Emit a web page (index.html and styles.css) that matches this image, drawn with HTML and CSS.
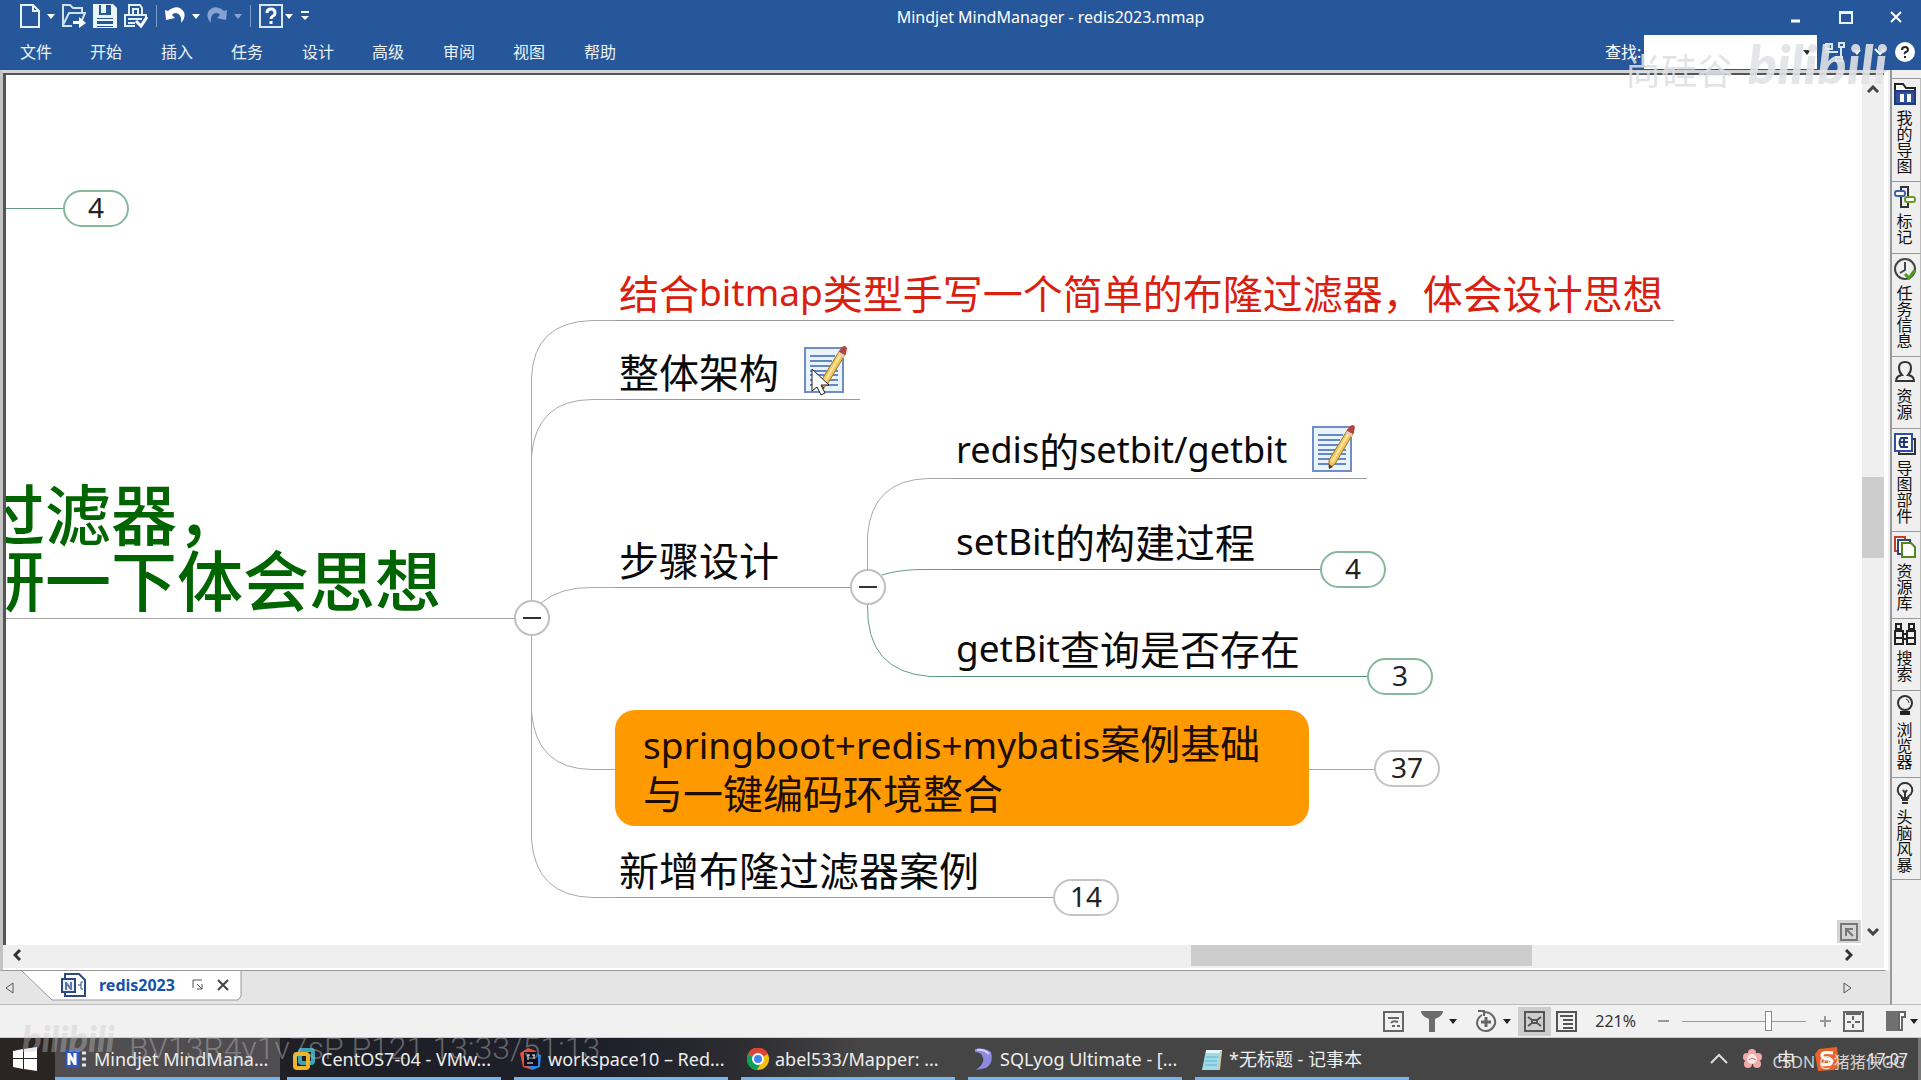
FILE: index.html
```html
<!DOCTYPE html>
<html lang="zh-CN">
<head>
<meta charset="utf-8">
<title>Mindjet MindManager - redis2023.mmap</title>
<link rel="stylesheet" href="styles.css">
</head>
<body>
<svg class="defs" aria-hidden="true">
  <symbol id="i-note" viewBox="0 0 44 48">
    <rect x="1" y="3" width="38" height="44" fill="#eaf2fc" stroke="#6f8fc4" stroke-width="2"/>
    <path d="M6 11h25M6 16h22M6 21h20M6 26h28M6 30h28M6 35h28M6 40h28" stroke="#6288c6" stroke-width="2"/>
    <path d="M36 5l6 3-19 32-6 4 0-8z" fill="#f2c65c" stroke="#9a7430" stroke-width="1"/>
    <path d="M38 7L20 38" stroke="#fbe6a0" stroke-width="2"/>
    <path d="M35 7l2-4q4-4 6 0l-1 5-1 2z" fill="#b9433d"/>
    <path d="M35 7l6 4-1 2-6-4z" fill="#d9d3d0"/>
    <path d="M17 40v5l4-2z" fill="#4a3b2a"/>
  </symbol>
  <symbol id="i-arrow" viewBox="0 0 10 6"><path d="M0 0h10L5 6z" fill="currentColor"/></symbol>
</svg>

<div class="app">
  <header class="head">
    <div class="titlebar">
      <div class="quick">
        <button class="ib" aria-label="新建"><svg width="20" height="24" viewBox="0 0 20 24"><path d="M1 1h12l6 6v16H1zM13 1v6h6" fill="none" stroke="#e6f1f4" stroke-width="2"/></svg></button>
        <button class="ib" aria-label="新建选项"><svg width="8" height="5"><use href="#i-arrow"/></svg></button>
        <button class="ib" aria-label="打开"><svg width="24" height="24" viewBox="0 0 24 24"><path d="M10 22H1V1h7l3 3h9v5M1 21L7 9h16l-3 7M13 4h6" fill="none" stroke="#cfe3ea" stroke-width="2"/><path d="M11 17h6v-4l7 6-7 5v-4h-6z" fill="#fff"/></svg></button>
        <button class="ib" aria-label="保存"><svg width="24" height="24" viewBox="0 0 24 24"><path d="M0 0h20l4 4v20H0z" fill="#eaf6f6"/><path d="M6 1h12v10H6z" fill="#27579b"/><path d="M8 1h5v8H8z" fill="#eaf6f6"/><path d="M4 14h16v9H4z" fill="#27579b"/><path d="M4 16h16M4 21h16" stroke="#eaf6f6" stroke-width="2"/></svg></button>
        <button class="ib" aria-label="打印"><svg width="24" height="24" viewBox="0 0 24 24"><path d="M5 11V1h11l2 3v7M1 23V11h21v5M1 22h10M9 10V5h5v5" fill="none" stroke="#e2f0f3" stroke-width="2"/><path d="M4 14h14v2H4zM4 18h7v2H4z" fill="#e2f0f3"/><path d="M12 17l5 5 6-9" fill="none" stroke="#fff" stroke-width="3"/></svg></button>
        <span class="sep"></span>
        <button class="ib" aria-label="撤销"><svg width="20" height="20" viewBox="0 0 20 20"><path d="M0 4l3 1Q13-3 19 6q2 6-3 11 1-9-5-10-3 0-4 2l3 3-9 2z" fill="#fff"/></svg></button>
        <button class="ib" aria-label="撤销选项"><svg width="8" height="5"><use href="#i-arrow"/></svg></button>
        <button class="ib dim" aria-label="重做"><svg width="20" height="20" viewBox="0 0 20 20"><path d="M20 4l-3 1Q7-3 1 6q-2 6 3 11-1-9 5-10 3 0 4 2l-3 3 9 2z" fill="currentColor"/></svg></button>
        <button class="ib dim" aria-label="重做选项"><svg width="8" height="5"><use href="#i-arrow"/></svg></button>
        <span class="sep"></span>
        <button class="ib" aria-label="帮助"><svg width="24" height="24" viewBox="0 0 24 24"><rect x="1" y="1" width="22" height="22" fill="none" stroke="#d9e8ee" stroke-width="2"/><path d="M8 9q0-4 4-4t4 4q0 2-2 3t-2 3M12 17v3" fill="none" stroke="#fff" stroke-width="3"/></svg><svg width="8" height="5"><use href="#i-arrow"/></svg></button>
        <button class="ib" aria-label="自定义"><svg width="10" height="10" viewBox="0 0 10 10"><path d="M1 1h8" stroke="#fff" stroke-width="2"/><path d="M1 5h8L5 9z" fill="#fff"/></svg></button>
      </div>
      <h1 class="title">Mindjet MindManager - redis2023.mmap</h1>
      <div class="winbtns">
        <button aria-label="最小化"><svg width="14" height="14"><path d="M2 11h9" stroke="#fff" stroke-width="3"/></svg></button>
        <button aria-label="最大化"><svg width="14" height="14"><path d="M1 2h12v11H1zM1 3h12" fill="none" stroke="#e8f4f6" stroke-width="2"/></svg></button>
        <button aria-label="关闭"><svg width="14" height="14"><path d="M2 2l10 10M12 2L2 12" stroke="#fff" stroke-width="2"/></svg></button>
      </div>
    </div>
    <div class="menubar">
      <nav class="menu">
        <button>文件</button><button>开始</button><button>插入</button><button>任务</button><button>设计</button><button>高级</button><button>审阅</button><button>视图</button><button>帮助</button>
      </nav>
      <div class="find">
        <label for="find">查找:</label>
        <span class="findbox"><input id="find" type="text"><svg width="8" height="5"><use href="#i-arrow"/></svg></span>
        <button class="ib" aria-label="查找范围"><svg width="22" height="20" viewBox="0 0 22 20"><path d="M2 2h6v5H2zM2 10h12M12 15h6v4h-6zM15 1h5v4h-5zM17 5v10" fill="none" stroke="#d9e8ee" stroke-width="2"/></svg></button>
        <button class="ib" aria-label="范围选项"><svg width="8" height="5"><use href="#i-arrow"/></svg></button>
        <button class="ib fold-menu" aria-label="折叠"><svg width="12" height="8"><path d="M1 1l5 5 5-5" fill="none" stroke="#fff" stroke-width="2"/></svg></button>
        <button class="ib" aria-label="帮助中心"><svg width="20" height="20" viewBox="0 0 20 20"><circle cx="10" cy="10" r="10" fill="#fff"/><path d="M7 8q0-3 3-3t3 3q0 1-2 2t-1 2M10 14v2" fill="none" stroke="#222" stroke-width="2"/></svg></button>
      </div>
    </div>
    <div class="mark mark-school">尚硅谷</div>
    <div class="mark mark-bili">bilibili</div>
  </header>

  <div class="work">
    <main class="doc">
      <div class="frame">
        <div class="canvas">
          <svg class="links" width="1856" height="869" viewBox="6 75 1856 869" fill="none" stroke-width="1">
            <g stroke="#a9a9a9">
              <path d="M6 618.5H514M1308 769.5H1374"/>
              <path d="M531.5 600V377Q534 322 592 320.5H615"/>
              <path d="M531.5 456Q536 400 592 399.5H615"/>
              <path d="M541 603Q560 587 592 587.5H615"/>
              <path d="M531.5 636V840Q536 896 592 897.5H615"/>
              <path d="M531.5 712Q536 769 592 769.5H615"/>
              <path d="M867.5 569V535Q872 480 928 478.5H953"/>
            </g>
            <g stroke="#5f9f80">
              <path d="M6 208.5H63"/>
              <path d="M882 575Q900 569 928 569.5H953"/>
              <path d="M867.5 605Q866 672 930 676.5H953"/>
            </g>
          </svg>
          <div class="root">过滤器，<br>研一下体会思想</div>
          <div class="topic n1">结合<span class="lat">bitmap</span>类型手写一个简单的布隆过滤器，体会设计思想</div>
          <div class="topic n2">整体架构<svg class="note" width="44" height="48"><use href="#i-note"/></svg></div>
          <div class="topic n3">步骤设计</div>
          <div class="topic n4"><span class="lat">redis</span>的<span class="lat">setbit/getbit</span><svg class="note" width="44" height="48"><use href="#i-note"/></svg></div>
          <div class="topic green n5"><span class="lat">setBit</span>的构建过程</div>
          <div class="topic green n6"><span class="lat">getBit</span>查询是否存在</div>
          <div class="card"><span class="lat">springboot+redis+mybatis</span>案例基础<br>与一键编码环境整合</div>
          <div class="topic n7">新增布隆过滤器案例</div>
          <button class="pill green p1">4</button>
          <button class="pill green p2">4</button>
          <button class="pill green p3">3</button>
          <button class="pill p4">37</button>
          <button class="pill p5">14</button>
          <button class="fold f1" aria-label="折叠分支"></button>
          <button class="fold f2" aria-label="折叠分支"></button>
          <svg class="cursor" width="20" height="28" viewBox="0 0 20 28"><path d="M1 1v22l5-4 4 8 4-2-4-8h8z" fill="#fff" stroke="#222" stroke-width="1"/></svg>
          <button class="corner" aria-label="全图"><svg width="18" height="18" viewBox="0 0 18 18"><path d="M1 1h16v16H1zM6 13V6h7M6 6l7 7" fill="none" stroke="#777" stroke-width="2"/></svg></button>
        </div>
        <div class="vbar">
          <svg width="12" height="8"><path d="M1 7l5-5 5 5" fill="none" stroke="#444" stroke-width="3"/></svg>
          <span class="vthumb"></span>
          <svg width="12" height="8"><path d="M1 1l5 5 5-5" fill="none" stroke="#444" stroke-width="3"/></svg>
        </div>
        <div class="hbar">
          <svg width="8" height="12"><path d="M7 1L2 6l5 5" fill="none" stroke="#333" stroke-width="3"/></svg>
          <span class="hthumb"></span>
          <svg width="8" height="12"><path d="M1 1l5 5-5 5" fill="none" stroke="#333" stroke-width="3"/></svg>
        </div>
      </div>
      <div class="tabs">
        <button class="ib" aria-label="上一个"><svg width="9" height="14"><path d="M8 2v10L1 7z" fill="none" stroke="#555"/></svg></button>
        <div class="tab">
          <svg class="tabshape" width="220" height="32"><path d="M0 0l30 29h186l3-4V0" fill="#fff" stroke="#999"/></svg>
          <svg width="25" height="24" viewBox="0 0 25 24"><path d="M4 6V1h14l6 6v16H4v-4" fill="#fff" stroke="#2c4a80" stroke-width="2"/><rect x="1" y="6" width="13" height="13" fill="#e8eefb" stroke="#2c4a80" stroke-width="2"/><path d="M5 9v8M10 9v8M5 10l5 6" fill="none" stroke="#5f78a8" stroke-width="2"/><path d="M17 12h3M22 9h-2v7h2" fill="none" stroke="#2c4a80"/></svg>
          <b>redis2023</b>
          <svg width="12" height="12"><path d="M1 9V1h9M5 5l5 5M10 5v5H5" fill="none" stroke="#555"/></svg>
          <button class="ib" aria-label="关闭标签"><svg width="12" height="12"><path d="M1 1l10 10M11 1L1 11" stroke="#444" stroke-width="2"/></svg></button>
        </div>
        <button class="ib next" aria-label="下一个"><svg width="9" height="14"><path d="M1 2v10l7-5z" fill="none" stroke="#555"/></svg></button>
      </div>
    </main>
    <aside class="side">
      <button class="s4"><svg width="22" height="22" viewBox="0 0 22 22"><path d="M1 21V1h8l3 4h9v16z" fill="#fff" stroke="#222" stroke-width="2"/><path d="M1 8h20v13H1z" fill="#2f4f9f" stroke="#223a78" stroke-width="2"/><path d="M6 11h4v8H6zM13 11h4v8h-4z" fill="#fff"/></svg><span>我的导图</span></button>
      <button class="s2"><svg width="22" height="22" viewBox="0 0 22 22" fill="none" stroke-width="2"><path d="M7 1h7v20H7z" stroke="#333"/><rect x="1" y="5" width="10" height="5" rx="2" fill="#fff" stroke="#3b62ae"/><rect x="11" y="11" width="10" height="5" rx="2" fill="#fff" stroke="#6b9a28"/></svg><span>标记</span></button>
      <button class="s4"><svg width="22" height="22" viewBox="0 0 22 22" fill="none" stroke-width="2"><circle cx="11" cy="11" r="10" stroke="#444"/><path d="M11 4v8l-5 3" stroke="#444"/><path d="M11 16l4 4 6-8" stroke="#4e9a1e" stroke-width="3"/></svg><span>任务信息</span></button>
      <button class="s2"><svg width="22" height="22" viewBox="0 0 22 22"><path d="M2 20q0-5 6-6-3-3-3-7 0-6 6-6t6 6q0 4-3 7 6 1 6 6z" fill="none" stroke="#333" stroke-width="2"/></svg><span>资源</span></button>
      <button class="s4"><svg width="22" height="22" viewBox="0 0 22 22"><path d="M5 18v3h16V6h-3" fill="none" stroke="#333" stroke-width="2"/><path d="M1 1h17v17H1z" fill="#fff" stroke="#2f4f9f" stroke-width="2"/><path d="M14 5H7q-3 5 0 9h7M5 9h9M10 5v9" fill="none" stroke="#223a78" stroke-width="2"/></svg><span>导图部件</span></button>
      <button class="s3"><svg width="22" height="22" viewBox="0 0 22 22" stroke-width="2" fill="#fff"><path d="M1 1h10v14H1z" stroke="#b9452e"/><path d="M4 4h12v14H4z" stroke="#3b3f78"/><path d="M8 7h9l4 4v10H8z" stroke="#4e8a1e"/></svg><span>资源库</span></button>
      <button class="s2"><svg width="22" height="22" viewBox="0 0 22 22" fill="none" stroke="#222" stroke-width="2"><path d="M2 1h5v5H2zM15 1h5v5h-5zM1 8h8v13H1zM13 8h8v13h-8zM9 11h4M9 16h4M1 15h8M13 15h8"/></svg><span>搜索</span></button>
      <button class="s3"><svg width="22" height="22" viewBox="0 0 22 22"><circle cx="11" cy="8" r="7" fill="none" stroke="#333" stroke-width="2"/><path d="M12 4q3 1 3 4" fill="none" stroke="#333"/><path d="M6 16h10v4H6z" fill="#222"/></svg><span>浏览器</span></button>
      <button class="s4"><svg width="22" height="22" viewBox="0 0 22 22" fill="none" stroke="#333" stroke-width="2"><path d="M8 16q0-2-3-4-2-3-1-6 2-5 7-5t7 5q1 3-1 6-3 2-3 4zM8 21h6M8 18h6M9 8l2 3 2-3M11 11v4"/></svg><span>头脑风暴</span></button>
    </aside>
  </div>

  <div class="status">
    <button class="ib" aria-label="备注"><svg width="21" height="21" viewBox="0 0 21 21" fill="none" stroke="#666" stroke-width="2"><path d="M1 1h19v19H1zM5 7h11M8 12q2-3 7-1M9 15h3M14 15h3"/></svg></button>
    <button class="ib arrow" aria-label="筛选"><svg width="22" height="21"><path d="M0 0h22q0 5-8 8v13H8V8Q0 5 0 0" fill="#6c6c6c"/></svg><svg width="8" height="5"><use href="#i-arrow"/></svg></button>
    <button class="ib arrow" aria-label="定位"><svg width="22" height="22" viewBox="0 0 22 22" fill="none" stroke="#666" stroke-width="2"><path d="M8 3q5-2 9 2 4 4 3 9-3 7-9 7-7 0-9-7 0-6 5-9M3 1h6v5"/><path d="M11 7v10M6 12h10" stroke-width="3"/></svg><svg width="8" height="5"><use href="#i-arrow"/></svg></button>
    <button class="ib sel" aria-label="导图视图"><svg width="21" height="21" viewBox="0 0 21 21" fill="none" stroke="#555" stroke-width="2"><path d="M1 1h19v19H1zM4 6l4 3M17 6l-4 3M4 15l4-3M17 15l-4-3M8 9h5v3H8z"/></svg></button>
    <button class="ib" aria-label="大纲视图"><svg width="21" height="21" viewBox="0 0 21 21" fill="none" stroke="#555" stroke-width="2"><path d="M1 1h19v19H1zM4 5h13M7 9h10M7 13h10M7 17h10"/></svg></button>
    <label class="pct" for="zoom">221%</label>
    <button class="ib" aria-label="缩小"><svg width="11" height="11"><path d="M0 5h11" stroke="#999" stroke-width="2"/></svg></button>
    <input id="zoom" class="zoom" type="range" min="0" max="100" value="71">
    <button class="ib" aria-label="放大"><svg width="11" height="11"><path d="M0 5h11M5 0v11" stroke="#999" stroke-width="2"/></svg></button>
    <button class="ib" aria-label="适合窗口"><svg width="21" height="21" viewBox="0 0 21 21" fill="none" stroke="#666" stroke-width="2"><path d="M1 1h19v19H1zM3 3h15M10 5v4M10 13v4M4 11h4M12 11h5"/></svg></button>
    <button class="ib arrow panel" aria-label="任务窗格"><svg width="20" height="20"><path d="M0 0h12v20H0z" fill="#707070"/><path d="M13 1h6v5h-3v13h-3z" fill="#fff" stroke="#666" stroke-width="2"/></svg><svg width="8" height="5"><use href="#i-arrow"/></svg></button>
  </div>

  <footer class="taskbar">
    <button class="start" aria-label="开始菜单"><svg width="24" height="24" viewBox="0 0 24 24"><path d="M0 4l10-2v9H0zM11 2l13-2v11H11zM0 12h10v10L0 20zM11 12h13v12l-13-2z" fill="#fff"/></svg></button>
    <button class="task active"><svg width="22" height="22" viewBox="0 0 22 22"><path d="M0 2h13v18H0z" fill="#2f56b8"/><path d="M3 5v12M9 5v12M3 6l6 10" stroke="#fff" stroke-width="3"/><path d="M16 5h4M16 11h4M16 17h4" stroke="#dde6ff" stroke-width="3"/></svg><span>Mindjet MindMana...</span></button>
    <button class="task"><svg width="22" height="22" viewBox="0 0 22 22" fill="none" stroke-width="4"><rect x="7" y="2" width="13" height="13" rx="2" stroke="#3aa6b8"/><rect x="2" y="6" width="13" height="14" rx="2" stroke="#f0b428"/></svg><span>CentOS7-04 - VMw...</span></button>
    <button class="task"><svg width="22" height="22" viewBox="0 0 22 22"><path d="M0 5l8-5 8 3-3 19-10-3z" fill="#e8503a"/><path d="M12 3l9 4-1 12-8 3-4-4z" fill="#2f86e0"/><path d="M4 4h14v14H4z" fill="#10101c"/><path d="M7 7h3M12 7h3M7 15h6M8 7v5M14 7v4" stroke="#fff" stroke-width="1"/></svg><span>workspace10 – Red...</span></button>
    <button class="task"><svg width="22" height="22" viewBox="0 0 22 22"><circle cx="11" cy="11" r="11" fill="#f4c20d"/><path d="M11 11L1 6a11 11 0 0 1 20 0z" fill="#db4437"/><path d="M1 6a11 11 0 0 0 9 16l5-9-4-2z" fill="#0f9d58"/><circle cx="11" cy="11" r="5" fill="#4285f4" stroke="#fff" stroke-width="2"/></svg><span>abel533/Mapper: ...</span></button>
    <button class="task"><svg width="20" height="22" viewBox="0 0 20 22"><path d="M1 1q9-2 16 3 3 11-5 16l-10 2q9-7 7-12Q8 4 1 4z" fill="#8e8ae0"/><path d="M3 2q7-1 12 4" stroke="#d4d2fa" fill="none" stroke-width="2"/></svg><span>SQLyog Ultimate - [...</span></button>
    <button class="task"><svg width="22" height="22" viewBox="0 0 22 22"><path d="M5 2h16l-3 20H1z" fill="#9fdbe8"/><path d="M5 2h16v3H5z" fill="#e6f7fa"/><path d="M19 3l2 0-2 19h-2z" fill="#d2c9a0"/><path d="M5 9h12M4 13h12M4 17h12" stroke="#64b2c6"/></svg><span>*无标题 - 记事本</span></button>
    <div class="tray">
      <svg width="18" height="12"><path d="M1 10l8-8 8 8" fill="none" stroke="#ddd" stroke-width="2"/></svg>
      <svg width="21" height="22" viewBox="0 0 21 22"><g fill="#f1aaa8"><circle cx="10" cy="5" r="4"/><circle cx="5" cy="9" r="4"/><circle cx="16" cy="9" r="4"/><circle cx="6" cy="16" r="4"/><circle cx="15" cy="16" r="4"/></g><circle cx="10" cy="11" r="5" fill="#fbe6e4"/><path d="M7 12l3-2 4 2" stroke="#d06a74" fill="none"/></svg>
      <span class="ime">中</span>
      <svg width="24" height="24" viewBox="0 0 24 24"><path d="M4 2l18-2 2 18-5 5-16 1L0 7z" fill="#e9642a"/><path d="M18 6Q6 4 7 9q1 3 6 3 6 1 3 4-3 3-10 1" fill="none" stroke="#fff" stroke-width="3"/></svg>
      <time>17:07</time>
    </div>
    <div class="mark mark-foot">bilibili</div>
    <div class="mark mark-id">BV13R4y1v7sP P121 13:33/51:13</div>
    <div class="mark mark-csdn">CSDN @猪猪侠GG</div>
  </footer>
</div>
</body>
</html>
```
FILE: styles.css
```css
* { box-sizing: border-box; }
body {
  margin: 0;
  font: 16px/20px "Noto Sans", "Noto Sans CJK SC", sans-serif;
  color: #111;
  background: #efefef;
}
button {
  border: 0;
  padding: 0;
  background: none;
  font: inherit;
  color: inherit;
}
svg { display: block; flex: none; }
.defs { position: absolute; width: 0; height: 0; }
.app { min-height: 100vh; display: flex; flex-direction: column; overflow: hidden; }
.ib { display: flex; align-items: center; gap: 2px; }

/* header */
.head { position: relative; background: #27579b; color: #fff; }
.titlebar { display: flex; align-items: center; height: 34px; }
.quick { display: flex; align-items: center; gap: 7px; padding: 0 20px 2px 20px; }
.quick .sep { margin: 0 1px; }
.sep { width: 1px; height: 22px; background: #7f9cc8; }
.dim { color: #86a3d4; }
.title { flex: 1; margin: 0; text-align: center; font-size: 16px; font-weight: 400; }
.winbtns { display: flex; }
.winbtns button { width: 50px; display: flex; justify-content: center; }
.menubar { display: flex; justify-content: space-between; height: 36px; }
.menu { display: flex; padding-left: 20px; }
.menu button { width: 70px; flex: none; text-align: left; color: #e9f3f5; }
.menu button:nth-child(even) { width: 71px; }
.find { display: flex; align-items: center; gap: 7px; padding-right: 6px; }
.find label { width: 32px; white-space: nowrap; }
.findbox { position: relative; height: 34px; width: 173px; }
.findbox input { width: 100%; height: 100%; border: 0; padding: 0 24px 0 4px; background: #fff; font: inherit; }
.findbox svg { position: absolute; right: 6px; top: 15px; color: #333; }
.fold-menu { margin: 0 2px 0 6px; }

/* watermarks */
.mark { position: absolute; white-space: nowrap; pointer-events: none; z-index: 2; }
.mark-school { right: 188px; top: 50px; font-size: 36px; line-height: 44px; color: rgba(222, 224, 228, .9); }
.mark-bili { right: 34px; top: 32px; font: italic 900 54px/64px Lato, sans-serif; color: rgba(224, 226, 230, .9); }
.mark-foot { left: 22px; bottom: 18px; font: italic 900 36px/48px Lato, sans-serif; color: rgba(200, 200, 200, .4); }
.mark-id { left: 129px; bottom: 12px; font: 300 32px/40px Roboto, sans-serif; color: rgba(190, 190, 190, .45); }
.mark-csdn { right: 16px; bottom: 6px; font-size: 16px; line-height: 24px; color: rgba(235, 235, 235, .85); }

/* workspace */
.work { flex: 1; display: flex; }
.doc { flex: 1; min-width: 0; display: flex; flex-direction: column; }
.frame {
  flex: 1;
  display: grid;
  grid-template: 1fr 25px / 1fr 22px;
  margin-right: 2px;
  border-style: solid;
  border-width: 3px 4px 1px 3px;
  border-color: #d2d4d8 #fff #999 #c4c4c4;
}
.canvas { position: relative; overflow: hidden; background: #fff; border-top: 2px solid #555; border-left: 3px solid #555; }
.vbar { display: flex; flex-direction: column; align-items: center; justify-content: space-between; padding: 10px 0 9px; background: #efefef; border-top: 2px solid #555; }
.vthumb { width: 22px; height: 81px; margin-top: 14px; background: #cdcdcd; }
.hbar { grid-column: 1 / 3; display: flex; align-items: center; justify-content: space-between; padding: 0 31px 3px 10px; background: #efefef; border-bottom: 2px solid #fff; }
.hthumb { width: 341px; height: 22px; margin-left: 856px; background: #cdcdcd; }

/* mind map */
.links { position: absolute; left: 0; top: 0; }
.root { position: absolute; left: -27px; top: 403px; font: 500 66px/66px "Noto Sans CJK SC", sans-serif; color: #006400; white-space: nowrap; }
.topic {
  position: absolute;
  display: flex;
  align-items: center;
  height: 54px;
  padding: 0 0 4px 4px;
  border-bottom: 1px solid #999;
  font: 40px/50px "Noto Sans CJK SC", sans-serif;
  white-space: nowrap;
  color: #0a0a0a;
}
.topic.green { border-color: #4d9070; }
.lat { font-family: "Noto Sans", sans-serif; font-size: 37px; }
.note { margin: 0 0 4px 25px; }
.n1 { left: 609px; top: 192px; width: 1059px; color: #d9200f; }
.n2 { left: 609px; top: 271px; width: 245px; }
.n3 { left: 609px; top: 459px; width: 236px; }
.n4 { left: 946px; top: 350px; width: 415px; }
.n4 .lat { font-size: 36px; }
.n5 { left: 946px; top: 441px; width: 368px; }
.n6 { left: 946px; top: 548px; width: 415px; }
.n7 { left: 609px; top: 769px; width: 439px; }
.card {
  position: absolute;
  left: 609px;
  top: 635px;
  width: 694px;
  padding: 7px 28px 9px;
  border-radius: 20px;
  background: #ff9900;
  font: 40px/50px "Noto Sans CJK SC", sans-serif;
  white-space: nowrap;
  color: #1d0d04;
}
.card .lat { line-height: 40px; }
.pill {
  position: absolute;
  width: 66px;
  height: 37px;
  padding-bottom: 3px;
  border: 2px solid #c4c4c4;
  border-radius: 19px;
  background: #fff;
  font-size: 28px;
  line-height: 30px;
  color: #222;
}
.pill.green { border-color: #86b89d; }
.p1 { left: 57px; top: 115px; }
.p2 { left: 1314px; top: 476px; }
.p3 { left: 1361px; top: 583px; }
.p4 { left: 1368px; top: 675px; }
.p5 { left: 1047px; top: 804px; }
.fold { position: absolute; width: 36px; height: 36px; border: 2px solid #c0c0c0; border-radius: 50%; background: #fff; display: flex; align-items: center; justify-content: center; }
.fold::before { content: ""; width: 18px; height: 2px; background: #333; }
.f1 { left: 508px; top: 525px; }
.f2 { left: 844px; top: 494px; }
.cursor { position: absolute; left: 805px; top: 293px; }
.corner { position: absolute; right: 1px; bottom: 2px; width: 24px; height: 23px; display: flex; align-items: center; justify-content: center; background: #d4d4d4; }

/* document tabs */
.tabs { display: flex; height: 34px; padding: 0 38px 0 5px; background: #e5e5e5; border-bottom: 1px solid #bbb; }
.tab { position: relative; display: flex; align-items: center; gap: 13px; margin-left: 8px; padding: 0 8px 6px 39px; width: 220px; }
.tab > * { position: relative; }
.tab .tabshape { position: absolute; left: 0; top: 0; }
.tab b { font-size: 16px; color: #1552a8; width: 80px; }
.next { margin-left: auto; }

/* side tabs */
.side { width: 31px; padding-top: 8px; background: #efefef; border-left: 2px solid #999; border-bottom: 1px solid #bbb; }
.side button {
  display: flex;
  flex-direction: column;
  align-items: center;
  gap: 5px;
  width: 100%;
  padding: 4px 3px 0 0;
  border-top: 1px solid #999;
  border-right: 1px solid #bbb;
}
.side button:last-child { border-bottom: 1px solid #999; }
.side span { writing-mode: vertical-rl; text-orientation: upright; font: 16px/20px "Noto Sans CJK SC", sans-serif; }
.s4 { height: 103px; }
.s3 { height: 87px; }
.s2 { height: 72px; }

/* status bar */
.status { display: flex; align-items: center; justify-content: flex-end; gap: 12px; height: 33px; padding-right: 3px; background: #f1f1f1; border-bottom: 1px solid #ccc; }
.status .arrow { gap: 6px; margin: 0 1px 0 5px; }
.status .sel { padding: 4px 6px; margin: 0 -7px 0 -6px; background: #cdcdcd; }
.status .ib { color: #222; }
.status .panel { gap: 4px; margin: 0 0 0 10px; }
.pct { margin: 0 10px 0 6px; color: #333; }
.zoom { appearance: none; width: 124px; height: 20px; margin: 0 2px 0 1px; background: linear-gradient(#999, #999) center / 100% 1px no-repeat; }
.zoom::-webkit-slider-thumb { appearance: none; width: 7px; height: 20px; border: 1px solid #888; background: #fff; }

/* taskbar */
.taskbar { position: relative; display: flex; height: 42px; background: linear-gradient(90deg, #231f24 0, #1d1f29 600px, #2c2c31 740px, #454545 860px); color: #eee; }
.start { width: 55px; padding: 0 0 0 13px; background: #2a2423; }
.task { display: flex; align-items: center; gap: 6px; width: 214px; margin-right: 13px; padding: 2px 6px 0; border-bottom: 3px solid #76b5ec; font-size: 18px; white-space: nowrap; }
.task.active { width: 225px; padding-left: 11px; margin-right: 7px; background: #4f4d4f; }
.tray { flex: 1; display: flex; align-items: center; justify-content: flex-end; gap: 14px; padding-right: 10px; border-right: 3px solid #777; }
.tray .ime { font-size: 18px; margin-right: 6px; }
.tray time { font-size: 16px; margin-left: 14px; }
```
